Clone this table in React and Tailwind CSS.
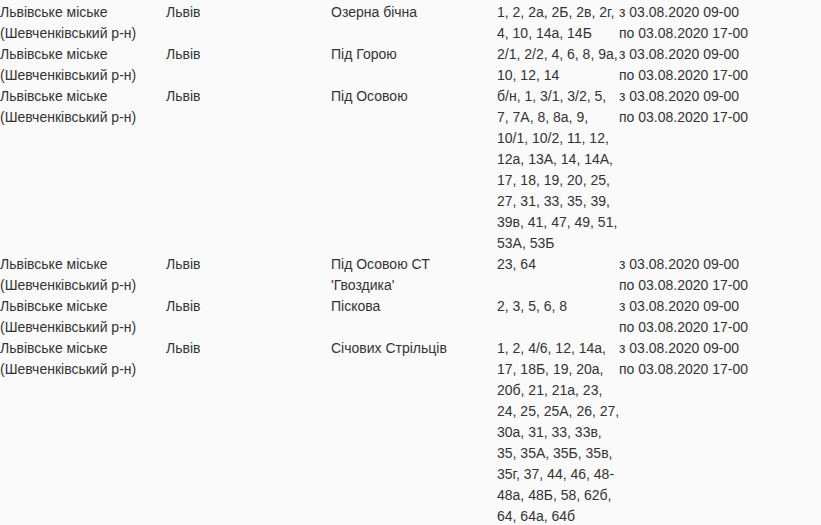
import React from "react";

const rows = [
  {
    street: "Озерна бічна",
    houses: ["1, 2, 2а, 2Б, 2в, 2г,", "4, 10, 14а, 14Б"],
  },
  {
    street: "Під Горою",
    houses: ["2/1, 2/2, 4, 6, 8, 9а,", "10, 12, 14"],
  },
  {
    street: "Під Осовою",
    houses: [
      "б/н, 1, 3/1, 3/2, 5,",
      "7, 7А, 8, 8а, 9,",
      "10/1, 10/2, 11, 12,",
      "12а, 13А, 14, 14А,",
      "17, 18, 19, 20, 25,",
      "27, 31, 33, 35, 39,",
      "39в, 41, 47, 49, 51,",
      "53А, 53Б",
    ],
  },
  {
    street: "Під Осовою СТ 'Гвоздика'",
    houses: ["23, 64"],
  },
  {
    street: "Піскова",
    houses: ["2, 3, 5, 6, 8"],
  },
  {
    street: "Січових Стрільців",
    houses: [
      "1, 2, 4/6, 12, 14а,",
      "17, 18Б, 19, 20а,",
      "20б, 21, 21а, 23,",
      "24, 25, 25А, 26, 27,",
      "30а, 31, 33, 33в,",
      "35, 35А, 35Б, 35в,",
      "35г, 37, 44, 46, 48-",
      "48а, 48Б, 58, 62б,",
      "64, 64а, 64б",
    ],
  },
];

export default function App() {
  return (
    <div className="bg-[#fafafa] min-h-screen overflow-hidden pt-[2px] text-[14px] leading-[21px] text-[#333] font-['Liberation_Sans',Arial,sans-serif]">
      <table className="table-fixed border-collapse w-[821px]">
        <colgroup>
          <col className="w-[166px]" />
          <col className="w-[165px]" />
          <col className="w-[166px]" />
          <col className="w-[122px]" />
          <col />
        </colgroup>
        <tbody>
          {rows.map((row, i) => (
            <tr key={i} className="align-top">
              <td className="p-0 pr-2">Львівське міське (Шевченківський р-н)</td>
              <td className="p-0 pr-2">Львів</td>
              <td className="p-0 pr-2">{row.street}</td>
              <td className="p-0 whitespace-nowrap">
                {row.houses.map((line, j) => (
                  <div key={j}>{line}</div>
                ))}
              </td>
              <td className="p-0">
                <div>з 03.08.2020 09-00</div>
                <div>по 03.08.2020 17-00</div>
              </td>
            </tr>
          ))}
        </tbody>
      </table>
    </div>
  );
}
